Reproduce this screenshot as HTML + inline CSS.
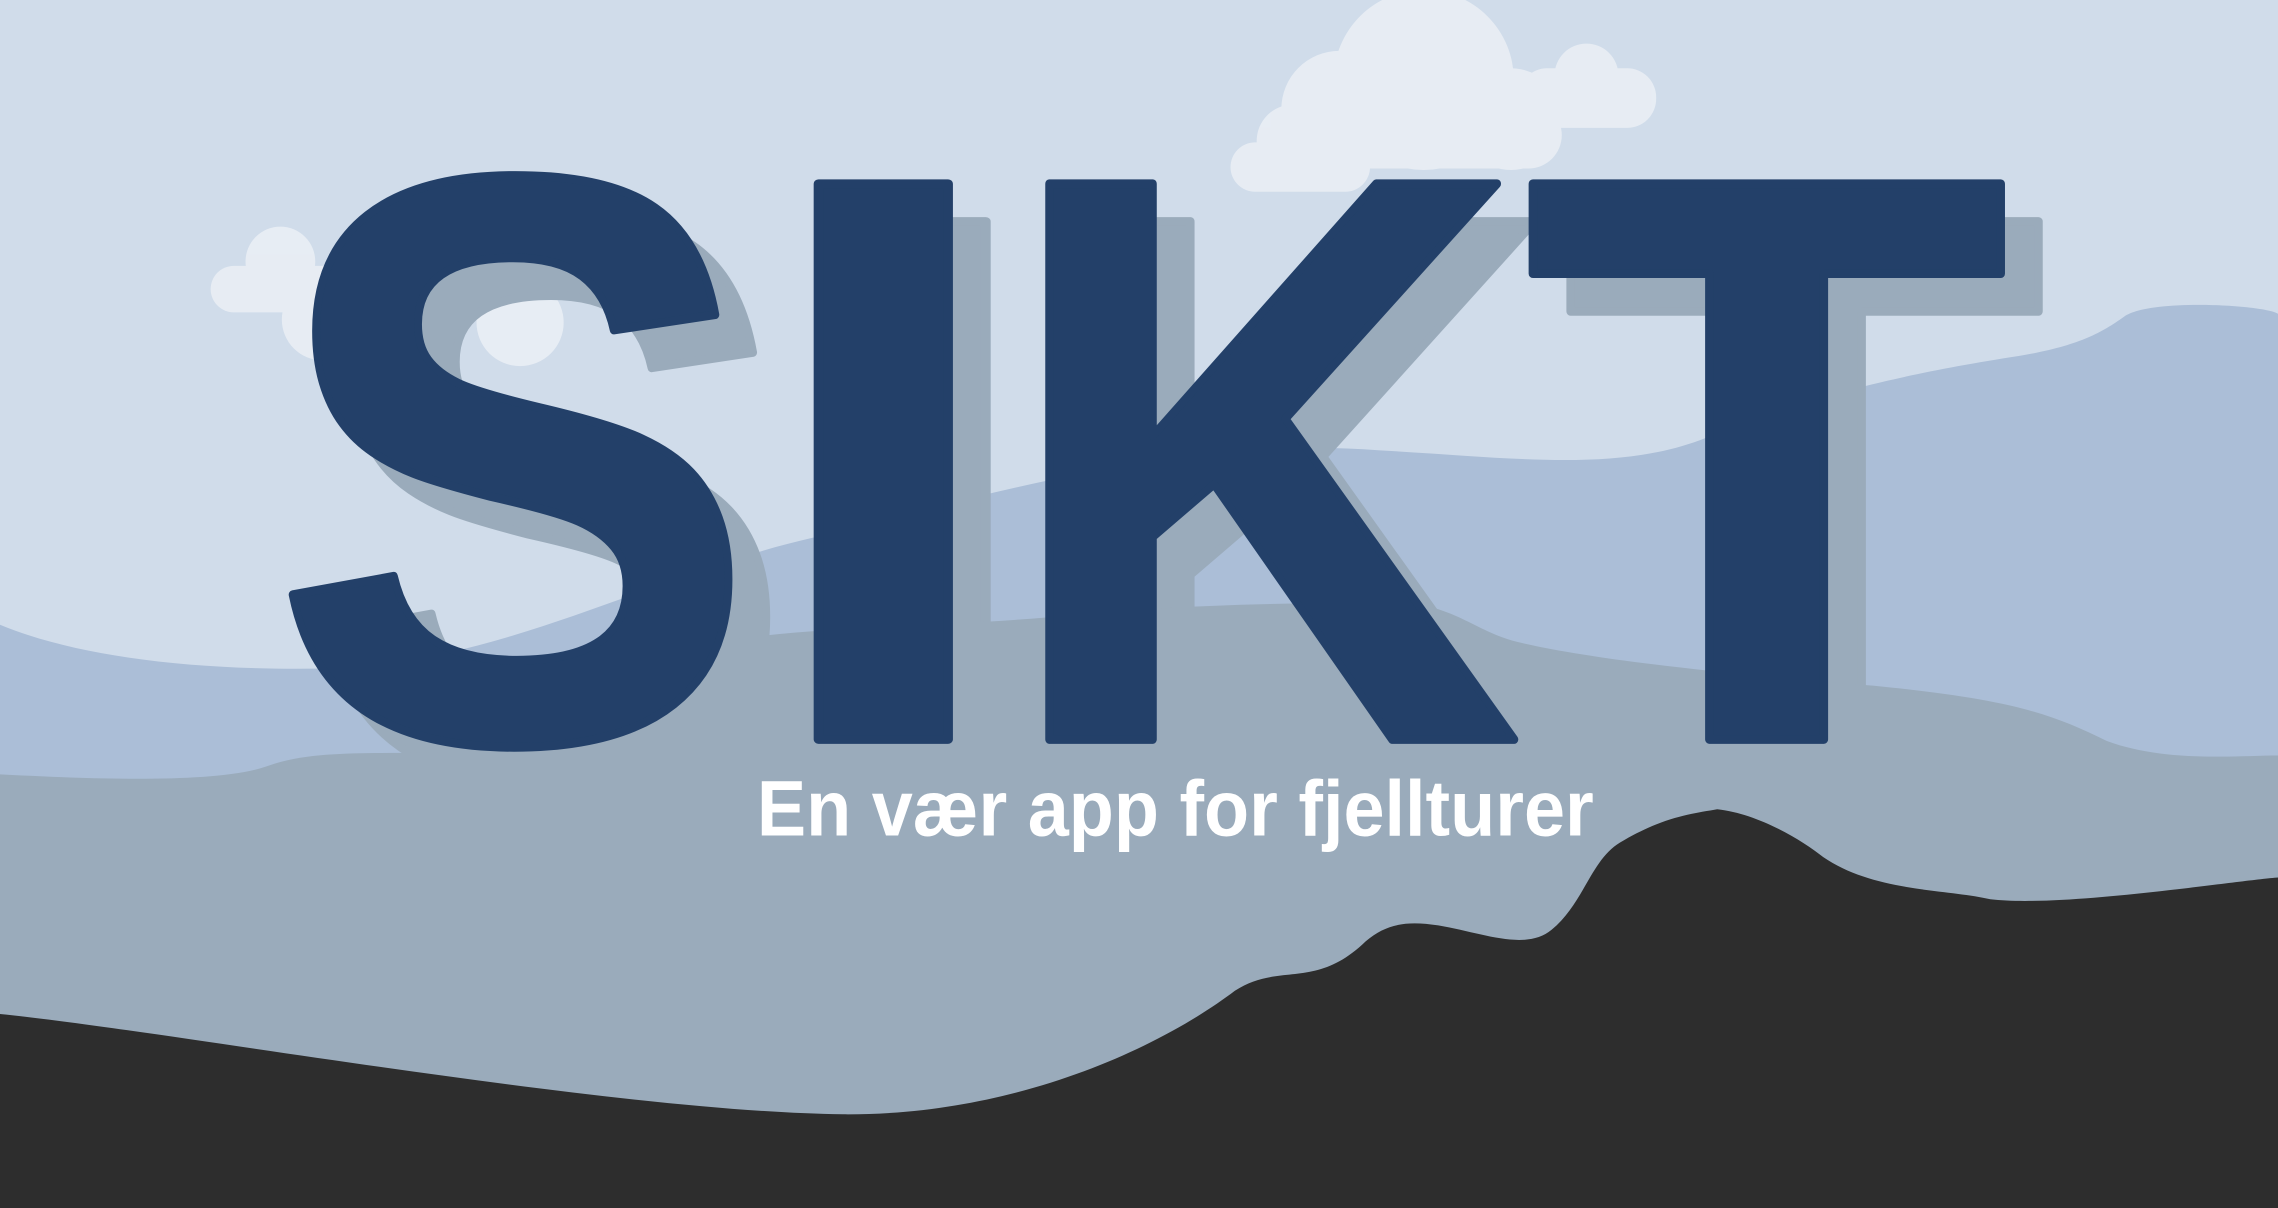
<!DOCTYPE html>
<html><head><meta charset="utf-8"><style>
html,body{margin:0;padding:0;width:2278px;height:1208px;overflow:hidden;background:#d0dcea}
svg{display:block}
text{font-family:"Liberation Sans",sans-serif;font-weight:bold}
</style></head><body>
<svg width="2278" height="1208" viewBox="0 0 1568 831.5" preserveAspectRatio="none">
<rect width="1568" height="832" fill="#d0dcea"/>
<path d="M0,430 C60,455 150,462 230,460 C350,455 450,395 560,370 C700,335 820,300 950,310 C1040,315 1110,325 1170,303 C1230,280 1280,262 1390,245 C1430,238 1445,230 1462,218 C1480,205 1560,210 1568,216 L1568,832 L0,832 Z" fill="#abbed7"/>
<g fill="#f1f4f8" opacity="0.7">
<circle cx="193" cy="180" r="24"/><rect x="145" y="183" width="95" height="32" rx="16"/>
<circle cx="222" cy="220" r="28"/>
<circle cx="358" cy="222" r="30"/>
<circle cx="980" cy="55" r="62"/><circle cx="922" cy="75" r="40"/><circle cx="1040" cy="82" r="35"/><rect x="885" y="70" width="190" height="46" rx="23"/>
<circle cx="1092" cy="52" r="22"/><rect x="1045" y="47" width="95" height="41" rx="20"/>
<circle cx="890" cy="97" r="25"/><rect x="847" y="98" width="96" height="34" rx="17"/>
</g>
<g fill="#9aabbb" stroke="#9aabbb" stroke-width="6" stroke-linejoin="round">
<text x="213" y="535" font-size="556" textLength="334" lengthAdjust="spacingAndGlyphs">S</text>
<text x="548" y="535" font-size="556" textLength="172" lengthAdjust="spacingAndGlyphs">I</text>
<text x="715" y="535" font-size="556" textLength="358" lengthAdjust="spacingAndGlyphs">K</text>
<text x="1075" y="535" font-size="556" textLength="334" lengthAdjust="spacingAndGlyphs">T</text>
</g>
<path d="M0,533 C60,536 150,540 185,527 C215,516 260,519 300,518 C330,510 400,460 470,445 C560,430 640,432 720,425 C820,415 900,415 960,415 C1000,415 1015,435 1045,442 C1100,455 1200,465 1290,472 C1380,481 1410,490 1450,510 C1490,525 1540,520 1568,520 L1568,832 L0,832 Z" fill="#9aabbb"/>
<path d="M0,698 C120,710 420,765 580,767 C700,768 800,720 850,682 C880,662 905,682 940,648 C955,635 970,634 990,637 C1020,642 1050,655 1068,640 C1090,622 1095,592 1115,580 C1145,562 1165,560 1182,557 C1210,560 1240,578 1255,590 C1290,614 1340,612 1370,619 C1420,625 1540,606 1568,604 L1568,832 L0,832 Z" fill="#2d2d2d"/>
<g fill="#234069" stroke="#234069" stroke-width="6" stroke-linejoin="round">
<text x="187" y="509" font-size="556" textLength="334" lengthAdjust="spacingAndGlyphs">S</text>
<text x="522" y="509" font-size="556" textLength="172" lengthAdjust="spacingAndGlyphs">I</text>
<text x="689" y="509" font-size="556" textLength="358" lengthAdjust="spacingAndGlyphs">K</text>
<text x="1049" y="509" font-size="556" textLength="334" lengthAdjust="spacingAndGlyphs">T</text>
</g>
<text x="521" y="575" font-size="54" textLength="576" lengthAdjust="spacingAndGlyphs" fill="#ffffff">En vær app for fjellturer</text>
</svg>
</body></html>
